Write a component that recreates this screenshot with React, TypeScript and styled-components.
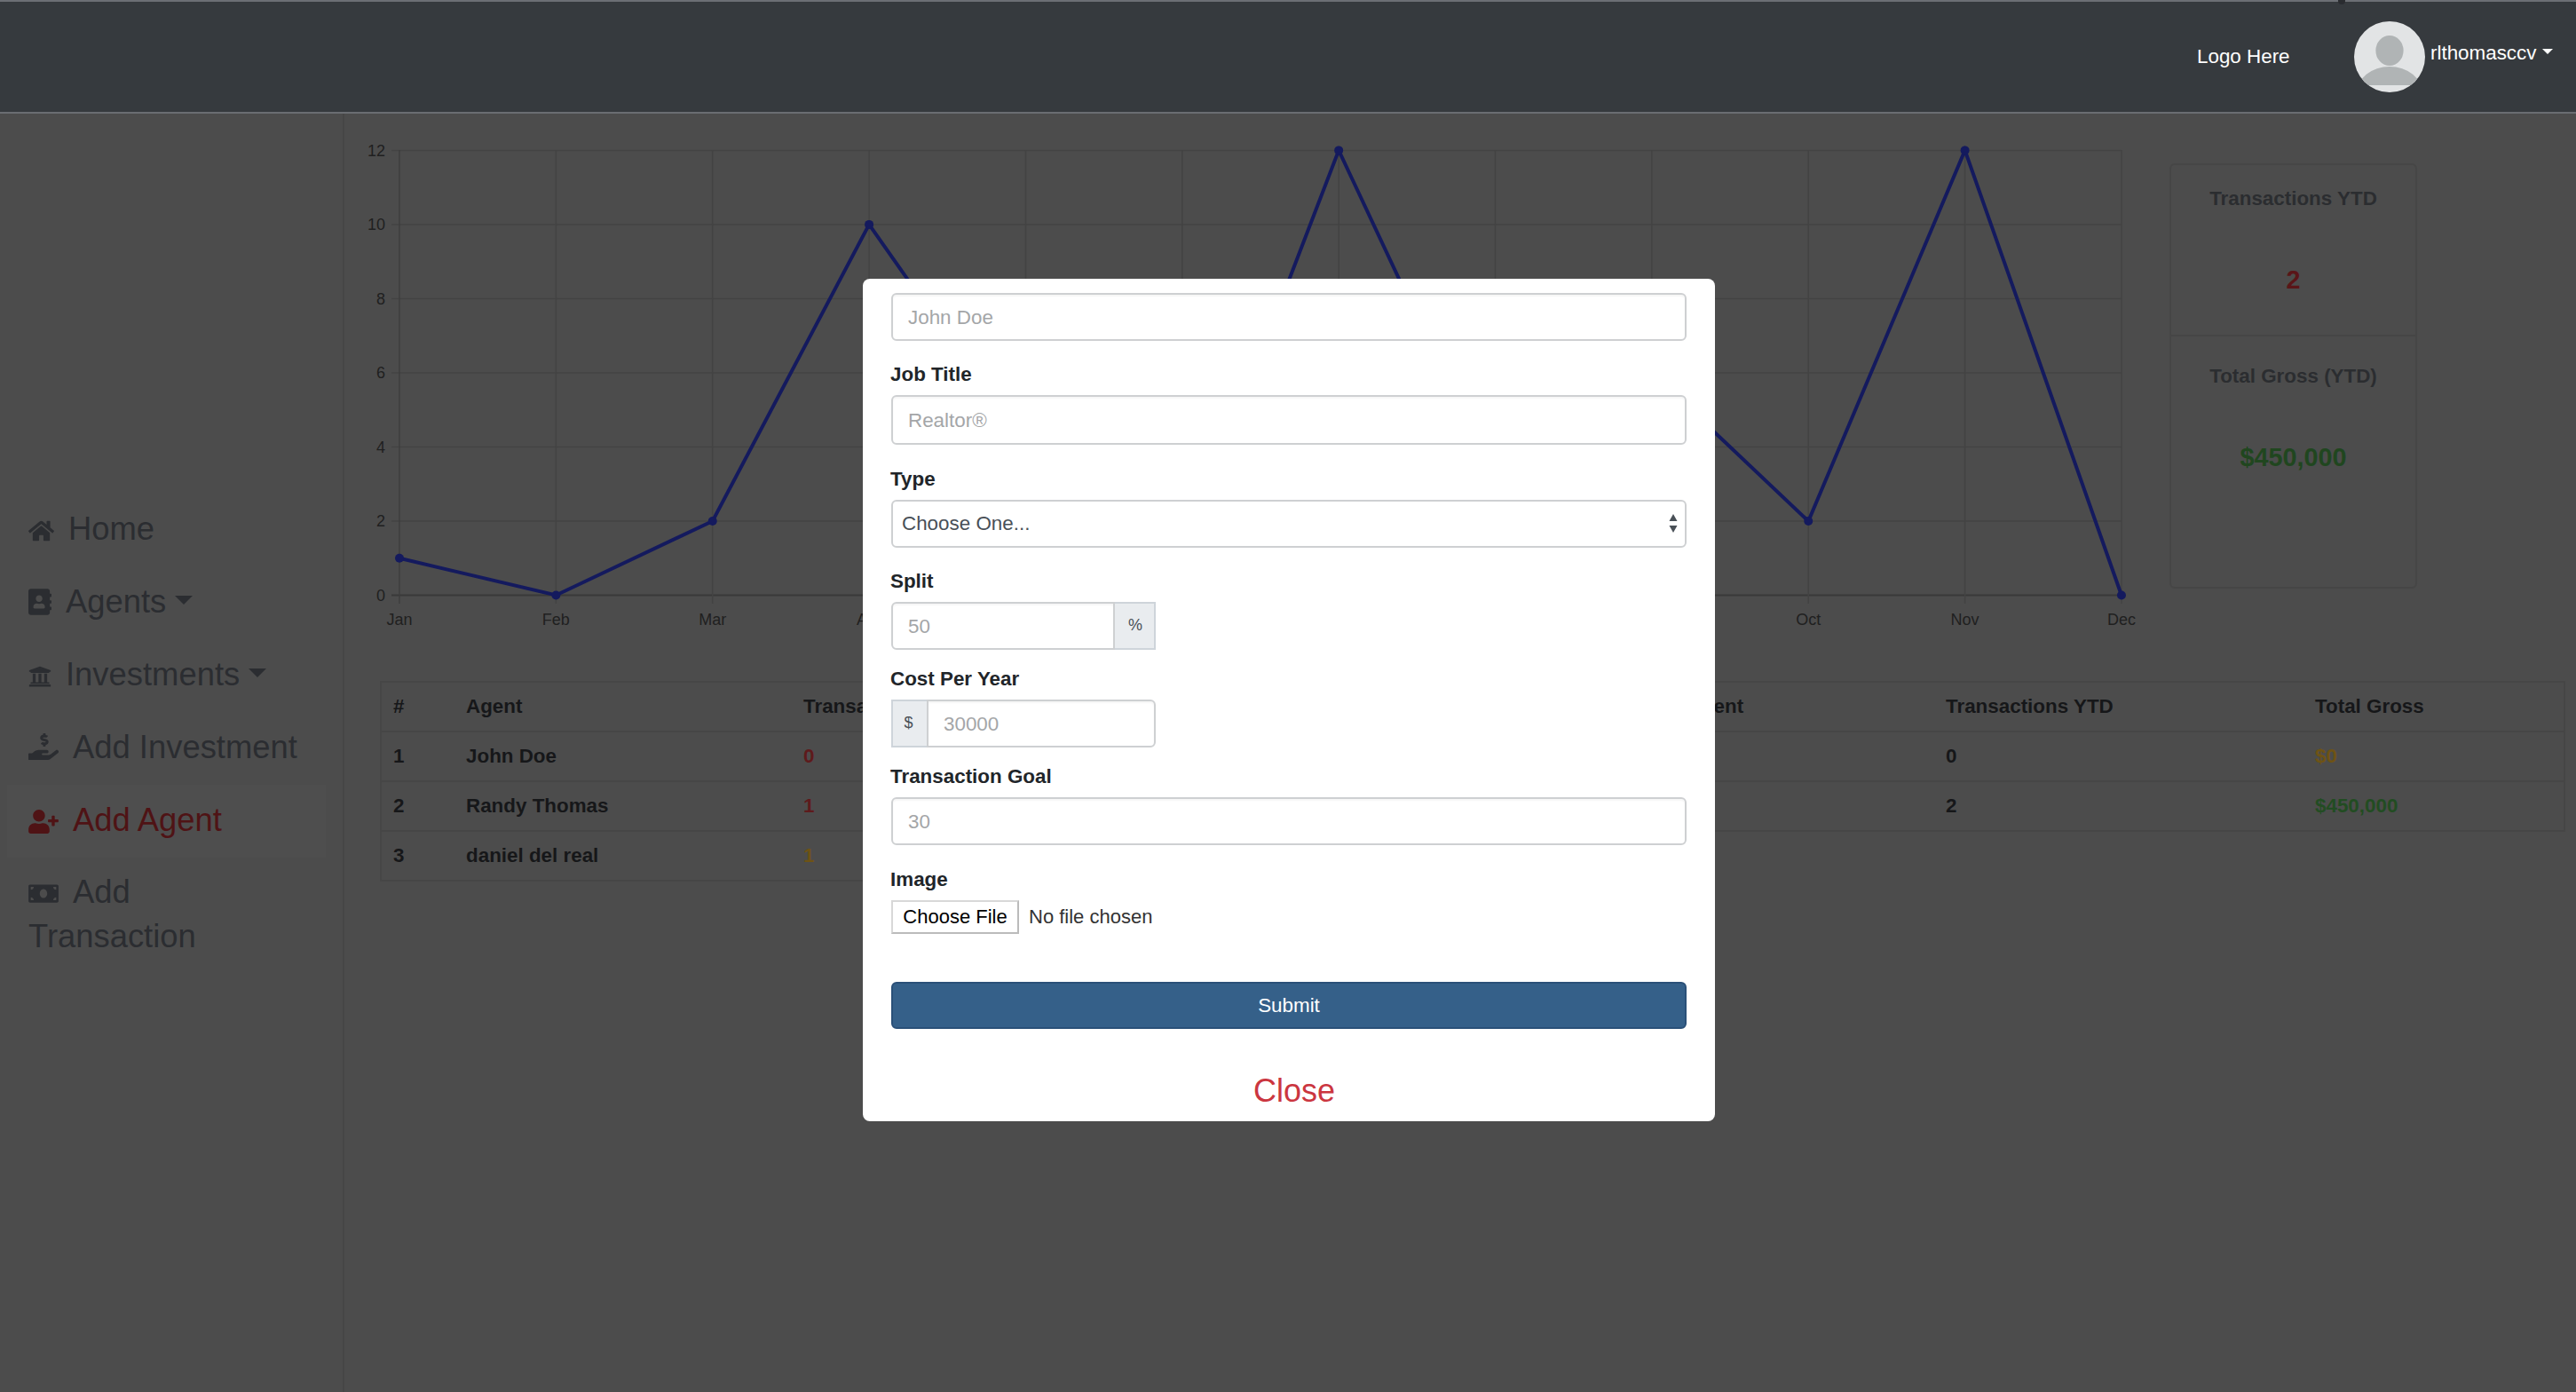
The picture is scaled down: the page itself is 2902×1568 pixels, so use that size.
import React from "react";
import styled, { createGlobalStyle } from "styled-components";
import {
  FaHome,
  FaAddressBook,
  FaUniversity,
  FaHandHoldingUsd,
  FaUserPlus,
  FaMoneyBill,
} from "react-icons/fa";

const FONT = `"Liberation Sans", Arial, Helvetica, sans-serif`;

const GlobalStyle = createGlobalStyle`
  html, body {
    margin: 0;
    padding: 0;
    background: #4c4c4c;
    font-family: ${FONT};
    font-size: 22.4px;
    line-height: 1.5;
  }
  * { box-sizing: border-box; }
`;

const Page = styled.div`
  position: relative;
  width: 2902px;
  height: 1568px;
  overflow: hidden;
  background: #4c4c4c;
`;

const Header = styled.header`
  height: 128px;
  display: flex;
  align-items: center;
  position: relative;
  background: #363a3e;
  border-top: 2px solid #6c6f75;
  border-bottom: 2px solid #6a6d72;
  color: #fff;
`;

const TopDot = styled.span`
  position: absolute;
  left: 2634px;
  top: -5px;
  width: 8px;
  height: 8px;
  border-radius: 50%;
  background: #2a2c30;
`;

const LogoText = styled.span`
  margin-left: 2475px;
  width: 177px;
  font-size: 22.4px;
`;

const Avatar = styled.svg`
  width: 80px;
  height: 80px;
  display: block;
`;

const UserName = styled.span`
  margin-left: 6px;
  margin-top: -8px;
  font-size: 22.4px;
  display: flex;
  align-items: center;
`;

const Caret = styled.span`
  display: inline-block;
  margin-left: 0.27em;
  vertical-align: 0.255em;
  border-top: 0.3em solid currentColor;
  border-left: 0.3em solid transparent;
  border-right: 0.3em solid transparent;
`;

const UserCaret = styled(Caret)`
  margin-top: -3px;
  border-top-width: 6px;
  border-left-width: 6px;
  border-right-width: 6px;
`;

const Body = styled.div`
  display: flex;
  height: 1440px;
`;

const Sidebar = styled.nav`
  width: 388px;
  flex-shrink: 0;
  padding: 429px 19px 0 8px;
  border-right: 2px solid #464646;
`;

const NavItem = styled.a<{ $active?: boolean }>`
  display: block;
  padding: 14.4px 24px;
  font-size: 36.4px;
  line-height: 50px;
  color: ${(p) => (p.$active ? "#4f1315" : "#2b2d31")};
  background: ${(p) => (p.$active ? "#4e4e4e" : "transparent")};
  &:not(:last-child) {
    padding-bottom: 17.4px;
  }
`;

const NavIcon = styled.span<{ $w: number; $h: number }>`
  display: inline-block;
  margin-right: 16px;
  vertical-align: -3px;
  svg {
    display: block;
    width: ${(p) => p.$w}px;
    height: ${(p) => p.$h}px;
  }
`;

const Main = styled.main`
  flex: 1;
  min-width: 0;
`;

const TopRow = styled.section`
  display: flex;
  align-items: flex-start;
  padding: 22px 0 0 12px;
`;

const ChartSvg = styled.svg`
  display: block;
  width: 2020px;
  height: 570px;
  flex-shrink: 0;
`;

const StatCard = styled.aside`
  width: 279px;
  height: 479px;
  margin: 34px 0 0 24px;
  border: 2px solid #464646;
  border-radius: 6px;
  text-align: center;
`;

const StatBlock = styled.div<{ $top: number; $divider?: boolean }>`
  height: ${(p) => (p.$divider ? "193px" : "auto")};
  padding-top: ${(p) => p.$top}px;
  border-bottom: ${(p) => (p.$divider ? "2px solid #464646" : "none")};
`;

const StatTitle = styled.div`
  font-size: 22.4px;
  line-height: 33.6px;
  font-weight: 700;
  color: #2b2d30;
`;

const StatValue = styled.div<{ $color: string }>`
  margin-top: 53px;
  font-size: 28.8px;
  line-height: 43px;
  font-weight: 700;
  color: ${(p) => p.$color};
`;

const Table = styled.table`
  width: 2460px;
  margin: 47px 0 0 40px;
  table-layout: fixed;
  border-collapse: collapse;
  font-size: 22.4px;
  font-weight: 700;
  color: #161719;
`;

const HeadCell = styled.th`
  height: 56px;
  padding: 0 13px;
  text-align: left;
  font-weight: 700;
  border-top: 2px solid #464646;
  border-bottom: 2px solid #464646;
  &:first-child {
    border-left: 2px solid #464646;
  }
  &:last-child {
    border-right: 2px solid #464646;
  }
`;

const Cell = styled.td<{ $color?: string }>`
  height: 56px;
  padding: 0 13px;
  color: ${(p) => p.$color || "inherit"};
  border-top: 2px solid #464646;
  border-bottom: 2px solid #464646;
  &:first-child {
    border-left: 2px solid #464646;
  }
  &:last-child {
    border-right: 2px solid #464646;
  }
`;

const Modal = styled.form`
  position: absolute;
  left: 972px;
  top: 314px;
  width: 960px;
  height: 949px;
  padding: 16px 32px 0 32px;
  border-radius: 8px;
  background: #fff;
  color: #212529;
`;

const Field = styled.div<{ $gap: number }>`
  margin-bottom: ${(p) => p.$gap}px;
`;

const Label = styled.label`
  display: block;
  margin: 0 0 6.4px -1px;
  font-size: 22.4px;
  line-height: 33.6px;
  font-weight: 700;
`;

const TextInput = styled.input<{ $tall?: boolean }>`
  display: block;
  width: 100%;
  height: ${(p) => (p.$tall ? "56px" : "54px")};
  padding: 2px 17px 0;
  border: 2px solid #ced0d2;
  border-radius: 6px;
  box-shadow: inset 0 2px 2px rgba(0, 0, 0, 0.04);
  font-family: ${FONT};
  font-size: 22.4px;
  color: #495057;
  outline: none;
  &::placeholder {
    color: #a4a6a8;
    opacity: 1;
  }
`;

const SelectInput = styled.select`
  display: block;
  width: 100%;
  height: 54px;
  padding: 0 30px 0 10px;
  border: 2px solid #ced0d2;
  border-radius: 6px;
  appearance: none;
  font-family: ${FONT};
  font-size: 22.4px;
  color: #495057;
  background: #fff
    url("data:image/svg+xml,%3Csvg xmlns='http://www.w3.org/2000/svg' width='10' height='21'%3E%3Cpath d='M5 0l4.5 8H.5zM5 21L.5 13h9z' fill='%23495057'/%3E%3C/svg%3E")
    no-repeat right 8px center;
`;

const InputGroup = styled.div`
  display: flex;
  width: 298px;
  height: 54px;
`;

const GroupInput = styled(TextInput)<{ $side: "left" | "right" }>`
  flex: 1;
  min-width: 0;
  height: 100%;
  border-radius: ${(p) => (p.$side === "left" ? "6px 0 0 6px" : "0 6px 6px 0")};
`;

const Addon = styled.span<{ $side: "left" | "right" }>`
  display: flex;
  align-items: center;
  justify-content: center;
  width: ${(p) => (p.$side === "left" ? "40px" : "46px")};
  padding: ${(p) => (p.$side === "left" ? "0 3px 0 0" : "0 0 0 2px")};
  border: 2px solid #ced4da;
  border-${(p) => (p.$side === "left" ? "right" : "left")}: none;
  background: #e9ecef;
  font-size: 18px;
  color: #495057;
`;

const FileInput = styled.input`
  display: block;
  height: 38px;
  font-family: ${FONT};
  font-size: 22px;
  color: #333;
  &::file-selector-button {
    width: 144px;
    height: 38px;
    margin-right: 11px;
    padding: 0;
    border: 2px solid;
    border-color: #d8d8d8 #bbb #bbb #d8d8d8;
    border-radius: 0;
    background: #fff;
    font-family: ${FONT};
    font-size: 22px;
    color: #000;
  }
`;

const SubmitButton = styled.button`
  display: block;
  width: 100%;
  height: 53px;
  margin-top: 54px;
  padding-top: 2px;
  border: 2px solid #2a5078;
  border-radius: 6px;
  background: #356089;
  font-family: ${FONT};
  font-size: 22.4px;
  color: #fff;
`;

const CloseLink = styled.div`
  margin-top: 44px;
  padding-left: 12px;
  text-align: center;
  font-size: 36px;
  line-height: 52px;
  color: #cb3640;
`;

const MONTHS = ["Jan", "Feb", "Mar", "Apr", "May", "Jun", "Jul", "Aug", "Sep", "Oct", "Nov", "Dec"];
const VALUES = [1, 0, 2, 10, 4, 1, 12, 3, 6, 2, 12, 0];
const TICKS = [0, 2, 4, 6, 8, 10, 12];

const xAt = (i: number) => 450 + i * 176.36;
const yAt = (v: number) => 670.5 - v * 41.76;

function Chart() {
  const line = VALUES.map((v, i) => `${xAt(i)},${yAt(v)}`).join(" ");
  return (
    <ChartSvg viewBox="400 150 2020 570">
      {TICKS.map((t) => (
        <g key={t}>
          <line x1={441} x2={2390} y1={yAt(t)} y2={yAt(t)} stroke={t === 0 ? "#393939" : "#434343"} strokeWidth={t === 0 ? 2 : 1.5} />
          <text x={434} y={yAt(t) + 6.5} textAnchor="end" fontSize="18" fill="#202020" fontFamily={FONT}>
            {t}
          </text>
        </g>
      ))}
      {MONTHS.map((m, i) => (
        <g key={m}>
          <line x1={xAt(i)} x2={xAt(i)} y1={169} y2={680} stroke={i === 0 ? "#3e3e3e" : "#434343"} strokeWidth={1.5} />
          <text x={xAt(i)} y={704} textAnchor="middle" fontSize="18" fill="#202020" fontFamily={FONT}>
            {m}
          </text>
        </g>
      ))}
      <polyline points={line} fill="none" stroke="#141a5e" strokeWidth={4} strokeLinejoin="miter" />
      {VALUES.map((v, i) => (
        <circle key={i} cx={xAt(i)} cy={yAt(v)} r={5} fill="#141a5e" />
      ))}
    </ChartSvg>
  );
}

function App() {
  return (
    <Page>
      <GlobalStyle />
      <Header>
        <TopDot />
        <LogoText>Logo Here</LogoText>
        <Avatar viewBox="0 0 80 80">
          <defs>
            <clipPath id="avatarCircle">
              <circle cx="40" cy="40" r="40" />
            </clipPath>
            <clipPath id="avatarBody">
              <rect x="0" y="0" width="80" height="72" />
            </clipPath>
          </defs>
          <circle cx="40" cy="40" r="40" fill="#e2e4e5" />
          <ellipse cx="40" cy="33" rx="15.6" ry="17" fill="#b0b4b5" />
          <g clipPath="url(#avatarCircle)">
            <ellipse cx="40" cy="81" rx="37" ry="30" fill="#b0b4b5" clipPath="url(#avatarBody)" />
          </g>
        </Avatar>
        <UserName>
          rlthomasccv
          <UserCaret />
        </UserName>
      </Header>
      <Body>
        <Sidebar>
          <NavItem><NavIcon $w={29} $h={26}><FaHome /></NavIcon>Home</NavItem>
          <NavItem><NavIcon $w={26} $h={30}><FaAddressBook /></NavIcon>Agents<Caret /></NavItem>
          <NavItem><NavIcon $w={26} $h={26}><FaUniversity /></NavIcon>Investments<Caret /></NavItem>
          <NavItem><NavIcon $w={34} $h={32}><FaHandHoldingUsd /></NavIcon>Add Investment</NavItem>
          <NavItem $active><NavIcon $w={34} $h={27}><FaUserPlus /></NavIcon>Add Agent</NavItem>
          <NavItem><NavIcon $w={34} $h={27}><FaMoneyBill /></NavIcon>Add Transaction</NavItem>
        </Sidebar>
        <Main>
          <TopRow>
            <Chart />
            <StatCard>
              <StatBlock $top={21} $divider>
                <StatTitle>Transactions YTD</StatTitle>
                <StatValue $color="#5a1518">2</StatValue>
              </StatBlock>
              <StatBlock $top={28}>
                <StatTitle>Total Gross (YTD)</StatTitle>
                <StatValue $color="#20461f">$450,000</StatValue>
              </StatBlock>
            </StatCard>
          </TopRow>
          <Table>
            <colgroup>
              <col width={83} />
              <col width={380} />
              <col width={977} />
              <col width={310} />
              <col width={416} />
              <col width={294} />
            </colgroup>
            <thead>
              <tr>
                <HeadCell>#</HeadCell>
                <HeadCell>Agent</HeadCell>
                <HeadCell>Transactions MTD</HeadCell>
                <HeadCell>Percent</HeadCell>
                <HeadCell>Transactions YTD</HeadCell>
                <HeadCell>Total Gross</HeadCell>
              </tr>
            </thead>
            <tbody>
              <tr>
                <Cell>1</Cell>
                <Cell>John Doe</Cell>
                <Cell $color="#5e1a1c">0</Cell>
                <Cell />
                <Cell>0</Cell>
                <Cell $color="#6e5314">$0</Cell>
              </tr>
              <tr>
                <Cell>2</Cell>
                <Cell>Randy Thomas</Cell>
                <Cell $color="#5e1a1c">1</Cell>
                <Cell />
                <Cell>2</Cell>
                <Cell $color="#224c22">$450,000</Cell>
              </tr>
              <tr>
                <Cell>3</Cell>
                <Cell>daniel del real</Cell>
                <Cell $color="#6e5314">1</Cell>
              </tr>
            </tbody>
          </Table>
        </Main>
      </Body>
      <Modal>
        <Field $gap={21}>
          <TextInput placeholder="John Doe" />
        </Field>
        <Field $gap={22}>
          <Label>Job Title</Label>
          <TextInput $tall placeholder="Realtor®" />
        </Field>
        <Field $gap={21}>
          <Label>Type</Label>
          <SelectInput defaultValue="">
            <option value="">Choose One...</option>
          </SelectInput>
        </Field>
        <Field $gap={16}>
          <Label>Split</Label>
          <InputGroup>
            <GroupInput $side="left" placeholder="50" />
            <Addon $side="right">%</Addon>
          </InputGroup>
        </Field>
        <Field $gap={16}>
          <Label>Cost Per Year</Label>
          <InputGroup>
            <Addon $side="left">$</Addon>
            <GroupInput $side="right" placeholder="30000" />
          </InputGroup>
        </Field>
        <Field $gap={22}>
          <Label>Transaction Goal</Label>
          <TextInput placeholder="30" />
        </Field>
        <Field $gap={0}>
          <Label>Image</Label>
          <FileInput type="file" />
        </Field>
        <SubmitButton type="button">Submit</SubmitButton>
        <CloseLink>Close</CloseLink>
      </Modal>
    </Page>
  );
}

export default App;
